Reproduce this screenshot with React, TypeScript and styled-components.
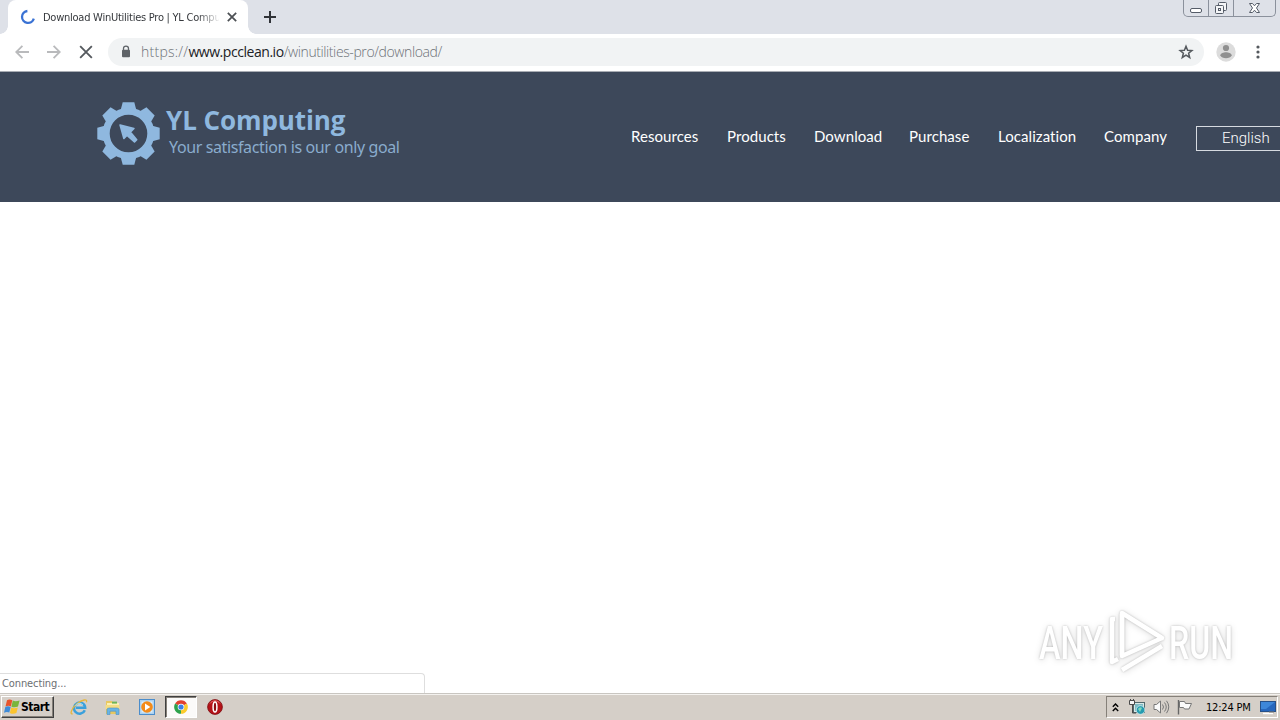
import styled, {createGlobalStyle} from 'styled-components';

const menu = [
  {label: 'Resources', width: 68},
  {label: 'Products', width: 59},
  {label: 'Download', width: 67},
  {label: 'Purchase', width: 61},
  {label: 'Localization', width: 78},
  {label: 'Company', width: 64},
];

const Spinner = () => (
  <svg width="16" height="16" viewBox="0 0 16 16" fill="none">
    <path d="M7.4 2A6 6 0 1 0 13.8 9.6" stroke="#3a72d4" strokeWidth="2.3" />
  </svg>
);

const Cross = ({size, color}: {size: number; color: string}) => (
  <svg width={size} height={size} viewBox="0 0 12 12">
    <path d="M1 1L11 11M11 1L1 11" stroke={color} strokeWidth={size < 12 ? 2.1 : 1.6} />
  </svg>
);

const Arrow = ({flip}: {flip?: boolean}) => (
  <svg width="14" height="14" viewBox="0 0 14 14" fill="none">
    <path
      d="M14 7H1.5M7.4 .8L1.2 7L7.4 13.2"
      stroke="#b9babc"
      strokeWidth="1.8"
      transform={flip ? 'rotate(180 7 7)' : undefined}
    />
  </svg>
);

const Lock = () => (
  <svg width="10" height="13" viewBox="0 0 10 13">
    <path d="M2.5 6V3.6a2.5 2.5 0 0 1 5 0V6" fill="none" stroke="#5f6368" strokeWidth="1.3" />
    <rect x="1" y="4.8" width="8" height="7.4" rx="1" fill="#5f6368" />
  </svg>
);

const Star = () => (
  <svg width="16" height="16" viewBox="0 0 16 16">
    <path
      d="M8 2.2L9.6 6.2L13.9 6.5L10.6 9.3L11.7 13.5L8 11.2L4.3 13.5L5.4 9.3L2.1 6.5L6.4 6.2Z"
      fill="none"
      stroke="#55595e"
      strokeWidth="1.5"
    />
  </svg>
);

const Avatar = () => (
  <svg width="20" height="20" viewBox="0 0 20 20">
    <circle cx="10" cy="10" r="9.7" fill="#dcdcdc" />
    <circle cx="10" cy="6" r="3.1" fill="#8f8f8f" />
    <path d="M4.3 13.6c0-2.4 3.4-3.4 5.7-3.4s5.7 1 5.7 3.4c-1 1.7-3 2.7-5.7 2.7s-4.7-1-5.7-2.7Z" fill="#8f8f8f" />
  </svg>
);

const Gear = () => (
  <svg width="64" height="64" viewBox="-31.5 -32.5 64 64">
    <circle r="22.3" fill="none" stroke="#8fb8df" strokeWidth="7" />
    {[0, 45, 90, 135, 180, 225, 270, 315].map((angle) => (
      <path key={angle} d="M-8.2 -22L-5.8 -31.2H5.8L8.2 -22Z" fill="#8fb8df" transform={`rotate(${angle})`} />
    ))}
    <path
      d="M-8.4 -8.4L5.4 -5L1.8 -1.4L8.2 6.2L6 8.4L-1.4 1.8L-4.6 5Z"
      fill="#8fb8df"
      stroke="#8fb8df"
      strokeWidth="1.6"
      strokeLinejoin="round"
    />
  </svg>
);

const Flag = () => (
  <svg width="16" height="16" viewBox="0 0 16 16">
    <path d="M3 1.2Q5.5-.3 8.3 1.2L6.9 7.4Q4.5 6 1.5 7.5Z" fill="#e8542c" />
    <path d="M8.8 1.5Q11.5 3 15.6 1.4L14 7.6Q10.5 9 7.4 7.7Z" fill="#79b53b" />
    <path d="M1.3 8.1Q4 6.6 6.7 8.1L5.3 13.6Q3 12.3 0 13.7Z" fill="#3f8bd8" />
    <path d="M7.2 8.4Q10 9.9 13.8 8.4L12.4 14Q9 15.6 5.9 13.9Z" fill="#fbc42e" />
  </svg>
);

const Explorer = () => (
  <svg width="18" height="18" viewBox="0 0 18 18" fill="none">
    <path d="M14.8 12.2A5.6 5.6 0 1 1 15.2 9.8H6" stroke="#3aa0dc" strokeWidth="2.5" />
    <path d="M2.6 15.6C-.6 17 1.4 10.4 7 5.8C12 1.6 18 .4 16.4 4.2" stroke="#e6b63c" strokeWidth="1.3" />
    <path d="M5.4 8A4.6 4.6 0 0 1 13 6.8" stroke="#9bdcf7" strokeWidth="1" />
  </svg>
);

const Folder = () => (
  <svg width="18" height="18" viewBox="0 0 18 18">
    <path d="M2 3h6l1 2h6v11H2Z" fill="#e8c860" />
    <path d="M3 5h12v6H3Z" fill="#fbf0b4" />
    <path d="M8 3.6h5v2H8Z" fill="#6fb556" />
    <path d="M1.5 7h14v4h-14Z" fill="#f5dd83" />
    <path d="M3 16.5V11.6Q3 10 5 10h8q2 0 2 1.6v4.9h-3v-3.3H6v3.3Z" fill="#69b4e4" stroke="#4b91c5" strokeWidth=".6" />
  </svg>
);

const Player = () => (
  <svg width="18" height="18" viewBox="0 0 18 18">
    <rect x="1.5" y="1.5" width="15" height="15" fill="#acd2f0" stroke="#4b8dcb" />
    <rect x="3.5" y="3.5" width="11" height="11" fill="#dceefb" />
    <circle cx="9" cy="9" r="5.8" fill="#f38b19" />
    <path d="M7 5.6L12.3 9L7 12.4Z" fill="#fff" />
  </svg>
);

const Chrome = () => (
  <svg width="14" height="14" viewBox="-7 -7 14 14">
    <path d="M0 0L-5.9 -3.4A6.8 6.8 0 0 1 5.9 -3.4Z" fill="#e2402f" />
    <path d="M0 0L5.9 -3.4A6.8 6.8 0 0 1 0 6.8Z" fill="#fbcb2d" />
    <path d="M0 0L0 6.8A6.8 6.8 0 0 1 -5.9 -3.4Z" fill="#2da24c" />
    <circle r="3.3" fill="#fff" />
    <circle r="2.6" fill="#3c7fe6" />
  </svg>
);

const Opera = () => (
  <svg width="16" height="16" viewBox="0 0 16 16">
    <circle cx="8" cy="8" r="7.4" fill="#b51218" stroke="#7c0b10" strokeWidth=".8" />
    <path d="M3 4.5A6 6 0 0 1 13 4.5" fill="none" stroke="#e8686a" strokeWidth="1" />
    <ellipse cx="8" cy="8" rx="1.9" ry="5" fill="#8c0d12" stroke="#fff" strokeWidth="1.5" />
  </svg>
);

const Chevrons = () => (
  <svg width="7" height="9" viewBox="0 0 7 9" fill="none" stroke="#000" strokeWidth="1.4">
    <path d="M.8 3.8L3.5 1L6.2 3.8M.8 8L3.5 5.2L6.2 8" />
  </svg>
);

const Network = () => (
  <svg width="17" height="16" viewBox="0 0 17 16">
    <rect x="4.5" y="3.5" width="11" height="10" fill="#d8e8e6" stroke="#50686c" />
    <rect x="6" y="5" width="8" height="7" fill="#7dbbc4" />
    <path d="M.5 1.5h5v4h-5Z" fill="#f4f4f4" stroke="#4a4a4a" />
    <path d="M1.5 0v2M4.5 0v2M3.5 6v8H7" fill="none" stroke="#4a4a4a" />
    <circle cx="11.5" cy="11" r="4.3" fill="#269bb0" stroke="#e4f4f5" strokeWidth=".7" />
    <path d="M9 10q2-3 4-1l-2 4Z" fill="#80d7bd" />
  </svg>
);

const Speaker = () => (
  <svg width="17" height="16" viewBox="0 0 17 16" fill="none" stroke="#777">
    <path d="M1 5.5h2.5L7.5 2v12L3.5 10.5H1Z" fill="#fafafa" />
    <path d="M9.5 5.5q2 2.5 0 5M11.5 3.5q3.5 4.5 0 9M13.5 1.8q4.5 6 0 12.4" />
  </svg>
);

const ActionFlag = () => (
  <svg width="17" height="16" viewBox="0 0 17 16">
    <path d="M1.5 1V15.5" stroke="#666" strokeWidth="1.4" />
    <path d="M2.5 2.5H7.5L8.5 4.5H14.5L12 10H7.5L6.5 8.5H2.5Z" fill="#fafafa" stroke="#777" />
  </svg>
);

const Desktop = () => (
  <svg width="16" height="15" viewBox="0 0 16 15">
    <rect x=".5" y="1.5" width="15" height="10" fill="#2767bd" stroke="#275088" />
    <path d="M1 2H15L6 9L1 9Z" fill="#3e87d9" />
    <path d="M3 13.5H13" stroke="#fff" strokeWidth="1.4" />
    <path d="M9 12h5" stroke="#777" />
  </svg>
);

const Watermark = () => (
  <Mark width="210" height="72" viewBox="0 0 210 72">
    <g fill="#fff" fontFamily="Roboto, sans-serif" fontSize="46" fontWeight="500">
      <text x="7" y="51" textLength="64" lengthAdjust="spacingAndGlyphs">ANY</text>
      <text x="137" y="51" textLength="64" lengthAdjust="spacingAndGlyphs">RUN</text>
    </g>
    <g fill="none" stroke="#fff" strokeWidth="4.5" strokeLinejoin="round">
      <path d="M90 47V5L130 30L97 9.5" />
      <path d="M90 6V48L130 30" />
      <path d="M83 11H80V54L86 51" />
      <path d="M90 62L130 38" />
    </g>
  </Mark>
);

const App = () => (
  <>
    <GlobalStyle />
    <Screen>
      <TabStrip>
        <Tab>
          <Spinner />
          <TabTitle>Download WinUtilities Pro | YL Compu</TabTitle>
          <Cross size={10} color="#4c5054" />
        </Tab>
        <NewTab>
          <svg width="12" height="12" viewBox="0 0 12 12">
            <path d="M6 0V12M0 6H12" stroke="#303338" strokeWidth="2" />
          </svg>
        </NewTab>
        <WindowButtons>
          <WindowButton $width={24}>
            <svg width="14" height="14" viewBox="0 0 14 14">
              <rect x="1.5" y="7.5" width="11" height="4" rx="1.5" fill="#fff" stroke="#555c68" />
            </svg>
          </WindowButton>
          <WindowButton $width={25}>
            <svg width="14" height="14" viewBox="0 0 14 14" fill="#f4f5f7" stroke="#555c68">
              <rect x="4.5" y="1.5" width="8" height="8" rx="1" />
              <rect x="1.5" y="4.5" width="8" height="8" rx="1" />
              <rect x="4.5" y="7.5" width="2" height="2" />
            </svg>
          </WindowButton>
          <WindowButton $width={42}>
            <svg width="13" height="12" viewBox="0 0 13 12">
              <path
                d="M1.5 1.5H4.5L6.5 3.8L8.5 1.5H11.5L8.5 6L11.5 10.5H8.5L6.5 8.2L4.5 10.5H1.5L4.5 6Z"
                fill="#fff"
                stroke="#555c68"
              />
            </svg>
          </WindowButton>
        </WindowButtons>
      </TabStrip>
      <Toolbar>
        <NavButtons>
          <Arrow />
          <Arrow flip />
          <Cross size={14} color="#55595e" />
        </NavButtons>
        <AddressBar>
          <Lock />
          <Url>
            <Scheme>https://</Scheme>
            <b>www.pcclean.io</b>/winutilities-pro/download/
          </Url>
          <Star />
        </AddressBar>
        <Avatar />
        <svg width="4" height="14" viewBox="0 0 4 14" fill="#55595e">
          <circle cx="2" cy="2" r="1.6" />
          <circle cx="2" cy="7" r="1.6" />
          <circle cx="2" cy="12" r="1.6" />
        </svg>
      </Toolbar>
      <Header>
        <Brand>
          <Gear />
          <BrandText>
            <BrandName>YL Computing</BrandName>
            <Slogan>Your satisfaction is our only goal</Slogan>
          </BrandText>
        </Brand>
        <Menu>
          {menu.map((item) => (
            <MenuItem key={item.label} $width={item.width}>
              {item.label}
            </MenuItem>
          ))}
        </Menu>
        <Language>English</Language>
      </Header>
      <Page>
        <Status>Connecting...</Status>
        <Watermark />
      </Page>
      <Taskbar>
        <StartButton>
          <Flag />
          Start
        </StartButton>
        <QuickLaunch>
          <Launcher><Explorer /></Launcher>
          <Launcher><Folder /></Launcher>
          <Launcher><Player /></Launcher>
          <Launcher $active><Chrome /></Launcher>
          <Launcher><Opera /></Launcher>
        </QuickLaunch>
        <Tray>
          <Chevrons />
          <TrayIcons>
            <Network />
            <Speaker />
            <ActionFlag />
          </TrayIcons>
          <Clock>12:24 PM</Clock>
          <Desktop />
        </Tray>
      </Taskbar>
    </Screen>
  </>
);

const GlobalStyle = createGlobalStyle`
  * {
    box-sizing: border-box;
  }

  body {
    margin: 0;
    overflow: hidden;
  }

  svg {
    display: block;
    flex: none;
  }
`;

const Screen = styled.div`
  width: 1280px;
  height: 720px;
  display: flex;
  flex-direction: column;
  overflow: hidden;
  background: #fff;
  font-family: 'DejaVu Sans Condensed', 'DejaVu Sans', sans-serif;
  white-space: nowrap;
`;

const TabStrip = styled.div`
  height: 34px;
  display: flex;
  padding-left: 8px;
  background: #dee1e8;
`;

const Tab = styled.div`
  position: relative;
  width: 240px;
  height: 34px;
  display: flex;
  align-items: center;
  padding: 0 11px 0 12px;
  border-radius: 8px 8px 0 0;
  background: #fff;

  &::before,
  &::after {
    content: '';
    position: absolute;
    bottom: 0;
    width: 8px;
    height: 8px;
  }
  &::before {
    left: -8px;
    background: radial-gradient(circle at 0 0, transparent 7.5px, #fff 8px);
  }
  &::after {
    right: -8px;
    background: radial-gradient(circle at 100% 0, transparent 7.5px, #fff 8px);
  }
`;

const TabTitle = styled.div`
  width: 176px;
  margin: 0 8px 0 7px;
  overflow: hidden;
  color: #35383c;
  font-size: 11px;
  letter-spacing: -0.25px;
  mask-image: linear-gradient(to right, #000 154px, transparent 178px);
`;

const NewTab = styled.div`
  display: flex;
  align-items: center;
  margin-left: 16px;
`;

const WindowButtons = styled.div`
  height: 17px;
  display: flex;
  margin: 0 4px 0 auto;
  border: 1px solid #8b919c;
  border-top: 0;
  border-radius: 0 0 5px 5px;
`;

const WindowButton = styled.div<{$width: number}>`
  width: ${({$width}) => $width}px;
  display: flex;
  align-items: center;
  justify-content: center;

  & + & {
    border-left: 1px solid #8b919c;
  }
`;

const Toolbar = styled.div`
  height: 38px;
  display: flex;
  align-items: center;
  padding: 0 20px 2px 15px;
  border-bottom: 1px solid #a9adb4;
`;

const NavButtons = styled.div`
  width: 93px;
  display: flex;
  gap: 18px;
`;

const AddressBar = styled.div`
  width: 1096px;
  height: 28px;
  display: flex;
  align-items: center;
  margin-right: 12px;
  padding: 0 10px 0 13px;
  border-radius: 14px;
  background: #f1f3f4;

  & ~ svg:last-child {
    margin-left: auto;
  }
`;

const Url = styled.div`
  flex: 1;
  margin-left: 10px;
  color: #6d7277;
  font: 300 14px 'Open Sans', sans-serif;
  letter-spacing: -0.4px;

  b {
    color: #202124;
    font-weight: 400;
    letter-spacing: -0.45px;
  }
`;

const Scheme = styled.span`
  letter-spacing: 0.25px;
`;

const Header = styled.div`
  height: 130px;
  display: flex;
  align-items: flex-start;
  background: #3d485a;
`;

const Brand = styled.div`
  width: 631px;
  flex: none;
  display: flex;
  padding: 29px 0 0 97px;
`;

const BrandText = styled.div`
  padding: 2px 0 0 5px;
`;

const BrandName = styled.div`
  color: #8fb8df;
  font: 700 26px/34px 'Open Sans', sans-serif;
  letter-spacing: -0.08px;
`;

const Slogan = styled.div`
  padding-left: 3px;
  color: #8aaccd;
  font: 400 16px/20px 'Noto Sans', sans-serif;
  letter-spacing: -0.38px;
`;

const Menu = styled.div`
  flex: none;
  display: flex;
  gap: 28px;
  padding-top: 54px;
`;

const MenuItem = styled.div<{$width: number}>`
  width: ${({$width}) => $width}px;
  color: #fff;
  font: 400 15px/20px Lato, sans-serif;
  letter-spacing: 0.07px;
`;

const Language = styled.div`
  width: 110px;
  height: 25px;
  flex: none;
  margin: 54px 0 0 28px;
  padding-left: 25px;
  border: 1px solid #d6dae0;
  color: #fff;
  font: 300 15px/23px Roboto, sans-serif;
`;

const Page = styled.div`
  position: relative;
  flex: 1;
`;

const Status = styled.div`
  position: absolute;
  left: 0;
  bottom: 0;
  width: 425px;
  height: 20px;
  padding-left: 2px;
  border: 1px solid #dedede;
  border-width: 1px 1px 0 0;
  border-radius: 0 4px 0 0;
  color: #6c6f73;
  font-size: 11px;
  letter-spacing: -0.1px;
  line-height: 19px;
`;

const Mark = styled.svg`
  position: absolute;
  left: 1032px;
  top: 406px;
  overflow: visible;
  filter: drop-shadow(0 0 1px rgba(0, 0, 0, 0.22)) drop-shadow(0 1px 3px rgba(0, 0, 0, 0.14));
`;

const Taskbar = styled.div`
  height: 27px;
  display: flex;
  align-items: center;
  padding: 0 2px 0 1px;
  border-top: 1px solid #c9c6c1;
  background: #d5cfc8;
  box-shadow: inset 0 1px #f4f2ef;
`;

const StartButton = styled.div`
  width: 53px;
  height: 22px;
  display: flex;
  align-items: center;
  gap: 1px;
  padding-left: 2px;
  border: 1px solid;
  border-color: #fff #404040 #404040 #fff;
  box-shadow: inset -1px -1px #858079;
  font-size: 12px;
  font-weight: 700;
  letter-spacing: -0.5px;
`;

const QuickLaunch = styled.div`
  display: flex;
  gap: 2px;
  margin-left: 9px;
`;

const Launcher = styled.div<{$active?: boolean}>`
  width: 32px;
  height: 22px;
  display: flex;
  align-items: center;
  justify-content: center;
  border: 1px solid transparent;
  ${({$active}) =>
    $active &&
    `
    border-color: #404040 #fff #fff #404040;
    background: #fbfaf9;
    box-shadow: inset 1px 1px #858079;
  `}
`;

const Tray = styled.div`
  width: 172px;
  height: 22px;
  display: flex;
  align-items: center;
  margin-left: auto;
  padding: 0 1px 0 5px;
  border: 1px solid;
  border-color: #858079 #fff #fff #858079;
`;

const TrayIcons = styled.div`
  display: flex;
  gap: 7px;
  margin-left: 10px;
`;

const Clock = styled.div`
  width: 54px;
  margin-left: 12px;
  color: #000;
  font-size: 11px;
  letter-spacing: -0.2px;
`;

export default App;
